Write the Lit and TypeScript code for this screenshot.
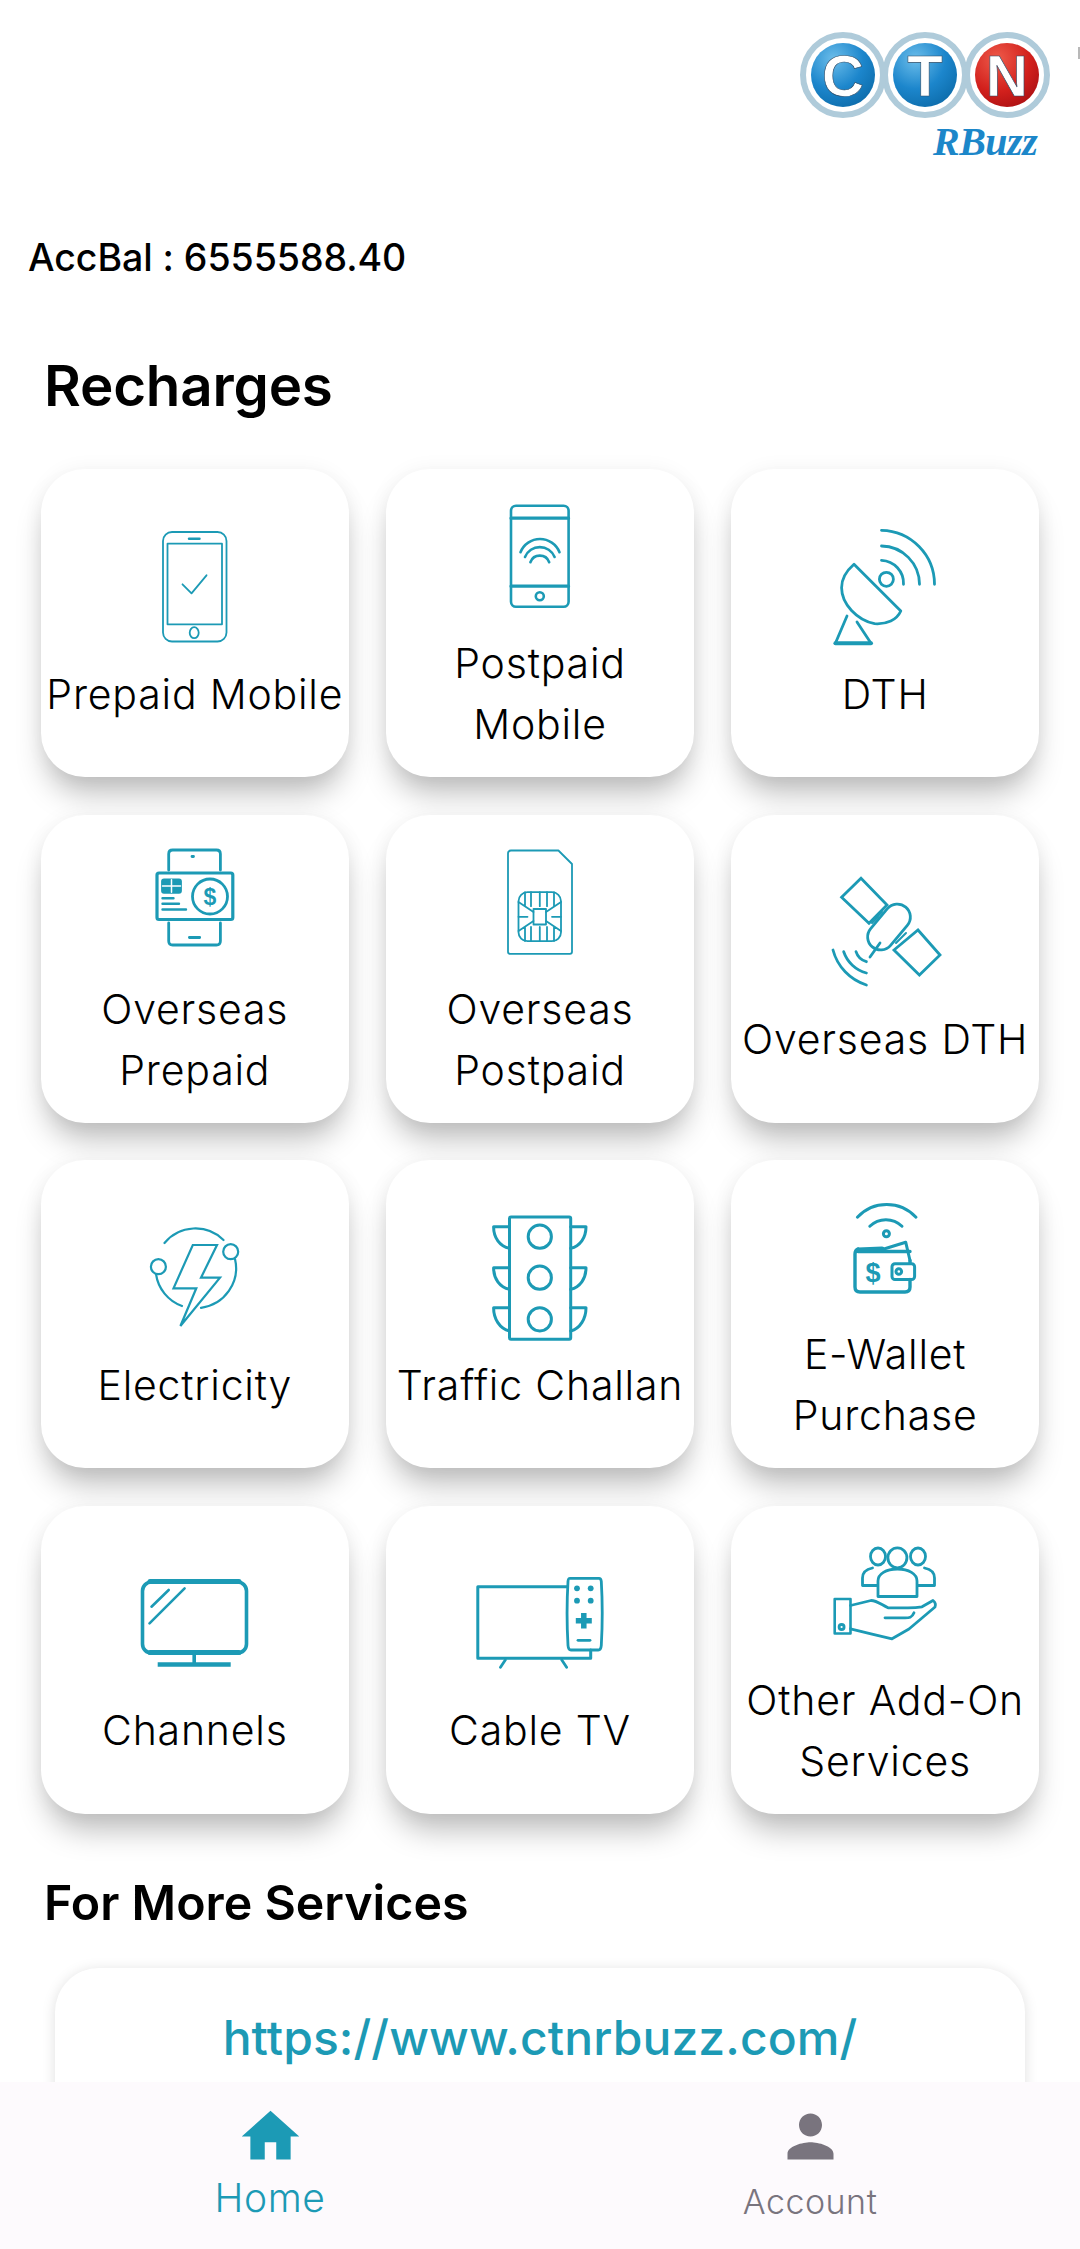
import { LitElement, html, css, svg, TemplateResult } from "lit";
import { customElement } from "lit/decorators.js";

const icons: Record<string, TemplateResult> = {
  prepaid: svg`<g stroke-width="1.8">
    <rect x="33" y="12" width="63.5" height="109.5" rx="9"/><rect x="37.5" y="23.7" width="54.5" height="80.6"/>
    <path d="M59 18.7h10.5" stroke-width="2.4"/><ellipse cx="64.2" cy="112.7" rx="4.5" ry="5.5"/>
    <path d="M52.5 64.3l9 9 15-18"/></g>`,
  postpaid: svg`<g stroke-width="2.6">
    <rect x="36" y="16.8" width="57.6" height="101" rx="5"/><path d="M36 29.2h57.6M36 97.2h57.6" stroke-width="3.2"/>
    <circle cx="64.8" cy="107.2" r="4"/>
    <path d="M45.5 63.2a21 21 0 0 1 39 0M50 68a16 16 0 0 1 29.6 0M55.4 73.2a10 10 0 0 1 18.8 0"/></g>`,
  dth: svg`<g stroke-width="2.8">
    <path d="M34 44.3L80.8 91c-4 9-14 13.5-26.2 12.7C37 100 21.6 84 21.6 67.7c0-8 5-17 12.4-23.4z"/>
    <circle cx="66.4" cy="59.3" r="7"/><path d="M27 96l-11.600 27.300h35.600L37 102"/>
    <path d="M15.400 123.300h35.600" stroke-width="4"/>
    <path d="M61.500 10.300a54 54 0 0 1 53 54M61.500 26a38.500 38.500 0 0 1 38 38.300M61.500 40.300a23 23 0 0 1 22 24"/></g>`,
  osprepaid: svg`<g stroke-width="2.8">
    <path d="M38.700 35V19q0-4 4-4h43.700q4 0 4 4v16M38.700 88v18q0 4 4 4h43.700q4 0 4-4V88"/>
    <rect x="27" y="38" width="75.800" height="46.500" rx="2" stroke-width="3.200"/>
    <circle cx="80" cy="61.500" r="17.500"/>
    <rect x="32.500" y="44.800" width="18" height="12.500" rx="1.500" fill="#1c9ab5"/>
    <path d="M41.500 44.800v12.500M32.500 51h18" stroke="#fff" stroke-width="1.500"/>
    <path d="M32.500 63.200h11M32.500 68.800h16.500M32.500 74.500h23.500" stroke-width="2.400"/>
    <path d="M62 21.500h1.500M59.400 102.500h10.300" stroke-width="2.800"/>
    <text x="80" y="69.500" text-anchor="middle" class="glyph" font-size="23">$</text></g>`,
  ospostpaid: svg`<g stroke-width="1.8">
    <path d="M36 15.500h47.400L97 29v87.800q0 2-2 2H35q-2 0-2-2V18.500q0-3 3-3z"/>
    <rect x="43.500" y="57.200" width="42.500" height="49" rx="9"/>
    <rect x="58.500" y="74" width="12.500" height="15.500"/>
    <path d="M50 57.200v14M56 57.200v14M64.800 57.200v14M72 57.200v14M79 57.200v14M50 92v14M56 92v14M64.800 92v14M72 92v14M79 92v14M43.500 67l15 10M86 67l-15 10M43.500 96l15-10M86 96l-15-10M43.500 81.800h9M86 81.800h-9"/></g>`,
  osdth: svg`<g stroke-width="2.800">
    <path d="M41 13.300L67 40 49 58.300 21.600 32.300zM98 65l22 25-20.600 20L74 85z" stroke-linejoin="miter"/>
    <rect x="43" y="49" width="52" height="26" rx="13" transform="rotate(-50 69 62)"/>
    <path d="M58 52l-6 6M62 47l-6 6M82 72l-6 6M86 68l-6 6" stroke-width="2"/>
    <path d="M60 78L50 92M13 85a50 50 0 0 0 33.400 35M23.700 86.700a33 33 0 0 0 22.700 21.300M36 86.700a15 15 0 0 0 10.400 10"/></g>`,
  electricity: svg`<g stroke-width="2.200">
    <path d="M34.500 32a40 40 0 0 1 59-3M105 48a40 40 0 0 1-34 48.800M52 95A40 40 0 0 1 26 63"/>
    <circle cx="100.700" cy="40.700" r="7.500"/><circle cx="28.400" cy="55.700" r="7.500"/>
    <path d="M62.800 34H87L71 66.700h19L50.400 115l15.900-37.700H43.500z" stroke-linejoin="miter"/></g>`,
  traffic: svg`<g stroke-width="3">
    <rect x="34.500" y="6" width="61.200" height="122.300" rx="1.500"/>
    <circle cx="64.800" cy="25.700" r="11.600"/><circle cx="64.800" cy="66.700" r="11.600"/><circle cx="64.800" cy="108.300" r="11.600"/>
    <path d="M34.500 15.700H18.600c0 11 6 19.500 15.900 21.600M34.500 56.700H18.600c0 11 6 19.500 15.900 21.600M34.500 96.700H18.600c0 11 6 21 15.900 23.300M95.700 15.700H111c0 11-6 19.500-15.300 21.600M95.700 56.700H111c0 11-6 19.500-15.300 21.600M95.700 96.700H111c0 11-6 21-15.300 23.300"/></g>`,
  wallet: svg`<g stroke-width="3">
    <path d="M37.400 37.200a40 40 0 0 1 58.600 0M49.800 46.200a23 23 0 0 1 32.200 0"/><circle cx="66.400" cy="53.800" r="3"/>
    <path d="M38 71.500h52M90 80.500V83M90 99.500V107q0 5-5 5H40q-5 0-5-5V74q0-4 3-5" stroke-width="3.400"/>
    <path d="M61.500 69.800L85.700 62.200 90 80.500" />
    <path d="M38 70l24-1" stroke-width="5"/>
    <rect x="72" y="83.800" width="22.600" height="15.700" rx="3"/><circle cx="78.800" cy="91.500" r="2.800"/>
    <text x="53" y="102" text-anchor="middle" class="glyph" font-size="27">$</text></g>`,
  channels: svg`<g stroke-width="3.600">
    <rect x="12.500" y="26" width="104" height="71" rx="9"/><path d="M20 25.500h89M20 96.500h89" stroke-width="5"/>
    <path d="M64.200 98v10" /><path d="M27.700 108.500h73" stroke-width="4.500" stroke-linecap="butt"/>
    <path d="M38.700 34L21.500 50.700M54.600 32.300L19.500 67.300" stroke-width="2.600"/></g>`,
  cable: svg`<g stroke-width="2.800">
    <path d="M92.300 30.700H2.800v71.600h112.900V94" stroke-width="3"/>
    <path d="M30.300 104l-4.800 7.300M86.800 104l4.800 7.300"/>
    <path d="M95 22.300h29q2 0 2.300 3c1.300 22 1.300 42 0 64-.3 3.500-1 4.700-3 4.700H96c-2 0-2.700-1.200-3-4.700-1.300-22-1.300-42 0-64 .3-3 1-3 2-3z"/>
    <g fill="#1c9ab5" stroke="none"><circle cx="102" cy="32.300" r="2.900"/><circle cx="115.700" cy="32.300" r="2.900"/><circle cx="102" cy="44.700" r="2.900"/><circle cx="115.700" cy="44.700" r="2.900"/></g>
    <path d="M108.800 57v15.500M100.800 64.700h16" stroke-width="5.500" stroke-linecap="butt"/><path d="M103 84.300h12" stroke-width="2.800"/></g>`,
  addon: svg`<g stroke-width="2.800">
    <ellipse cx="77.400" cy="31.800" rx="9.500" ry="10"/><ellipse cx="58" cy="30.500" rx="7.500" ry="8.500"/><ellipse cx="98" cy="30.500" rx="7.500" ry="8.500"/>
    <path d="M58 70.500V55c0-7 8-12 19.400-12S97 48 97 55v15.500zM58 59.500H42.500V52c0-6 5-9 10-10M97 59.500h17.500V52c0-6-5-9-10-10" />
    <rect x="14.700" y="73" width="15.800" height="34.500" stroke-width="2.600"/><circle cx="21.600" cy="101" r="2.500"/>
    <path d="M30.500 79.500L51 74.500c6 0 10 4 17 7.300h20c4 0 8 0 14-1L113 74.500c2.500 2 2.800 4.500 2 6.500L89 103 72 112.800 51 107.800 30.500 102.800M65 91.800h20c4 0 7 0 9-5"/></g>`,
};

const items = [
  ["prepaid", "Prepaid Mobile"],
  ["postpaid", "Postpaid Mobile"],
  ["dth", "DTH"],
  ["osprepaid", "Overseas Prepaid"],
  ["ospostpaid", "Overseas Postpaid"],
  ["osdth", "Overseas DTH"],
  ["electricity", "Electricity"],
  ["traffic", "Traffic Challan"],
  ["wallet", "E-Wallet Purchase"],
  ["channels", "Channels"],
  ["cable", "Cable TV"],
  ["addon", "Other Add-On Services"],
];

@customElement("app-root")
export class AppRoot extends LitElement {
  static styles = css`
    :host { display: flex; flex-direction: column; width: 1080px; height: 2249px; background: #fff; overflow: hidden;
      font-family: Inter, "Liberation Sans", sans-serif; color: #000; }
    .content { flex: 1; min-height: 0; overflow: hidden; }
    .header { display: flex; justify-content: flex-end; height: 200px; }
    .logo { width: 320px; height: 200px; display: block; }
    .bal { margin: 33px 0 0 28px; font-size: 37.5px; line-height: 50px; font-weight: 500; letter-spacing: -0.05px; }
    h2 { margin: 0; font-weight: 600; line-height: 60px; padding-left: 44px; }
    .h1 { margin-top: 73px; letter-spacing: -0.2px; font-size: 56.500px; }
    .h3 { margin-top: 59px; font-size: 48.300px; letter-spacing: 0; }
    .grid { margin: 53px 41px 0; display: grid; grid-template-columns: repeat(3, 1fr); gap: 37.500px; }
    .card { height: 308px; box-sizing: border-box; padding-bottom: 2px; background: #fff; border-radius: 44px; display: flex; flex-direction: column;
      align-items: center; justify-content: center; box-shadow: 0 22px 30px -6px rgba(0,0,0,.26), 0 0 20px rgba(0,0,0,.05); }
    .icon { width: 130px; height: 130px; margin-bottom: 14px; display: block; fill: none; stroke: #1c9ab5; stroke-linejoin: round; stroke-linecap: round; }
    .icon .glyph { fill: #1c9ab5; stroke: none; font-family: "Liberation Sans", sans-serif; font-weight: 700; }
    .label { font-size: 41px; line-height: 61px; font-weight: 300; text-align: center; letter-spacing: 0.8px; color: #000; padding: 0 4px; }
    .url { margin: 35px 55px 0; height: 300px; box-sizing: border-box; padding-top: 40px; background: #fff; border-radius: 44px;
      box-shadow: 0 2px 14px rgba(0,0,0,.13); text-align: center; color: #1c9ab5; font-size: 48px; line-height: 60px; font-weight: 550; letter-spacing: 0.1px; }
    .nav { flex: none; height: 167px; background: #fdfafd; display: flex; }
    .tab { flex: 1; display: flex; flex-direction: column; align-items: center; padding-top: 20px; box-sizing: border-box; color: #79747e; font-weight: 300; }
    .tab svg { width: 69px; height: 69px; display: block; fill: currentColor; }
    .tab span { display: block; line-height: 40px; }
    .home { color: #1c9ab5; }
    .home span { font-size: 39px; margin-top: 7px; letter-spacing: 0.6px; }
    .acct span { font-size: 34px; margin-top: 11px; letter-spacing: 0.5px; }
  `;

  render() {
    return html`
      <div class="content">
        <div class="header">
          <svg class="logo" viewBox="0 0 320 200">
            <defs>
              <radialGradient id="b" cx="35%" cy="25%" r="85%"><stop offset="0" stop-color="#6bbdea"/><stop offset=".55" stop-color="#1c86cc"/><stop offset="1" stop-color="#0c6aa8"/></radialGradient>
              <radialGradient id="r" cx="35%" cy="25%" r="85%"><stop offset="0" stop-color="#ee5a4a"/><stop offset=".6" stop-color="#d2201c"/><stop offset="1" stop-color="#a90f12"/></radialGradient>
            </defs>
            <circle cx="165" cy="75" r="40" fill="#fff" stroke="#afcbda" stroke-width="6"/>
            <circle cx="83" cy="75" r="40" fill="#fff" stroke="#afcbda" stroke-width="6"/>
            <circle cx="247" cy="75" r="40" fill="#fff" stroke="#afcbda" stroke-width="6"/>
            <circle cx="83" cy="75" r="32" fill="url(#b)"/><circle cx="165" cy="75" r="32" fill="url(#b)"/><circle cx="247" cy="75" r="32" fill="url(#r)"/>
            <g font-family="Liberation Sans, sans-serif" font-weight="700" font-size="58" text-anchor="middle" fill="#fff" stroke="#2a4a66" stroke-width=".6">
              <text x="83" y="96">C</text><text x="165" y="96">T</text><text x="247" y="96">N</text>
            </g>
            <text x="173" y="155" font-family="Liberation Serif, serif" font-style="italic" font-weight="700" font-size="40" fill="#1c87c9" letter-spacing="-.5">RBuzz</text>
            <path d="M319 47v12" stroke="#b8b8b8" stroke-width="2"/>
          </svg>
        </div>
        <div class="bal">AccBal : 6555588.40</div>
        <h2 class="h1">Recharges</h2>
        <div class="grid">
          ${items.map(([k, t]) => html`<div class="card">
            <svg class="icon" viewBox="0 0 130 130">${icons[k]}</svg>
            <div class="label">${t}</div>
          </div>`)}
        </div>
        <h2 class="h3">For More Services</h2>
        <div class="url">https://www.ctnrbuzz.com/</div>
      </div>
      <div class="nav">
        <div class="tab home">
          <svg viewBox="0 0 24 24"><path d="M10 20v-6h4v6h5v-8h3L12 3 2 12h3v8z"/></svg>
          <span>Home</span>
        </div>
        <div class="tab acct">
          <svg viewBox="0 0 24 24"><path d="M12 12c2.210 0 4-1.790 4-4s-1.790-4-4-4-4 1.790-4 4 1.790 4 4 4zm0 2c-2.670 0-8 1.340-8 4v2h16v-2c0-2.660-5.330-4-8-4z"/></svg>
          <span>Account</span>
        </div>
      </div>
    `;
  }
}
